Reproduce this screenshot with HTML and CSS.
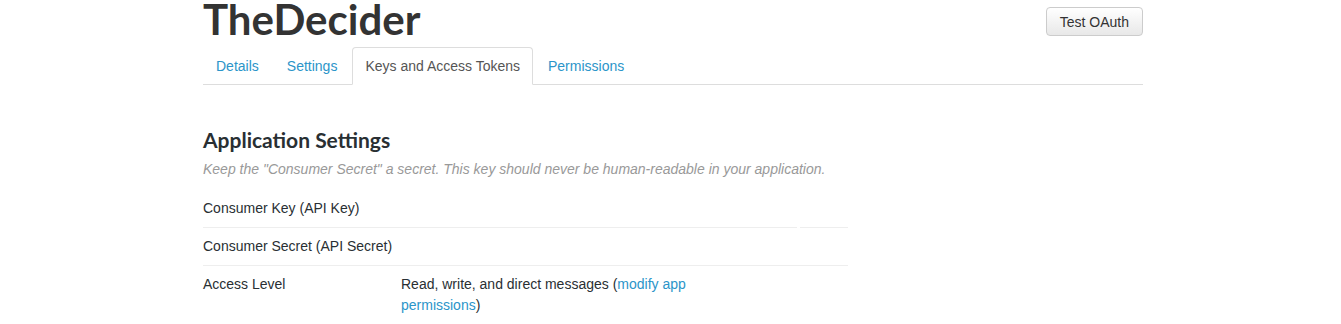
FILE: index.html
```html
<!DOCTYPE html>
<html lang="en">
<head>
    <meta charset="UTF-8">
    <title>TheDecider - Keys and Access Tokens</title>
    <link rel="stylesheet" href="styles.css">
</head>
<body>
    <div class="container">
        <div class="app-header">
            <h1 class="app-title">TheDecider</h1>
            <button class="btn">Test OAuth</button>
        </div>

        <ul class="nav-tabs">
            <li><a href="#">Details</a></li>
            <li><a href="#">Settings</a></li>
            <li class="active"><a href="#">Keys and Access Tokens</a></li>
            <li><a href="#">Permissions</a></li>
        </ul>

        <div class="section">
            <h2 class="section-title">Application Settings</h2>
            <p class="section-note">Keep the "Consumer Secret" a secret. This key should never be human-readable in your application.</p>

            <div class="row">
                <div class="row-label">Consumer Key (API Key)</div>
                <div class="row-value"></div>
                <div class="row-end"></div>
            </div>
            <div class="row">
                <div class="row-label">Consumer Secret (API Secret)</div>
                <div class="row-value wide"></div>
            </div>
            <div class="row last">
                <div class="row-label">Access Level</div>
                <div class="row-value narrow">Read, write, and direct messages (<a href="#">modify app permissions</a>)</div>
            </div>
        </div>
    </div>
</body>
</html>
```

FILE: styles.css
```css
body {
    margin: 0;
    padding-left: 5px;
    font-family: 'Liberation Sans', Arial, sans-serif;
    font-size: 14px;
    color: #292f33;
    background: #fff;
}
a {
    color: #2b95c9;
    text-decoration: none;
}
.container {
    width: 940px;
    margin: 0 auto;
}
.app-header {
    display: flex;
    justify-content: space-between;
    align-items: flex-start;
    height: 47px;
}
.app-title {
    margin: 0;
    font-family: Lato, 'Open Sans', sans-serif;
    font-weight: 700;
    font-size: 42px;
    line-height: 38px;
    color: #333;
}
.btn {
    margin-top: 7px;
    height: 29px;
    padding: 0 13px;
    font-family: 'Liberation Sans', Arial, sans-serif;
    font-size: 14px;
    color: #333;
    background: linear-gradient(#fff, #e8e8e8);
    border: 1px solid #ccc;
    border-radius: 4px;
}
/* Tabs */
.nav-tabs {
    display: flex;
    list-style: none;
    margin: 0;
    padding: 0;
    border-bottom: 1px solid #ddd;
}
.nav-tabs li {
    margin-right: 2px;
    margin-bottom: -1px;
}
.nav-tabs a {
    display: block;
    padding: 8px 12px;
    line-height: 20px;
    border: 1px solid transparent;
    border-radius: 4px 4px 0 0;
}
.nav-tabs .active a {
    color: #555;
    background: #fff;
    border-color: #ddd #ddd transparent;
}
/* Settings */
.section {
    padding-top: 41px;
}
.section-title {
    margin: 0;
    font-family: Lato, 'Open Sans', sans-serif;
    font-weight: 700;
    font-size: 21px;
    line-height: 28px;
    color: #292f33;
}
.section-note {
    margin: 5px 0 11px;
    font-style: italic;
    color: #999;
    line-height: 20px;
}
.row {
    display: flex;
    width: 645px;
}
.row > div {
    padding: 8px 0;
    line-height: 21px;
    border-bottom: 1px solid #eee;
}
.row.last > div {
    border-bottom: none;
}
.row-label {
    width: 198px;
}
.row-value {
    width: 396px;
}
.row-value.wide {
    flex: 1;
}
.row-value.narrow {
    width: 300px;
}
.row-end {
    flex: 1;
    margin-left: 3px;
}
```
